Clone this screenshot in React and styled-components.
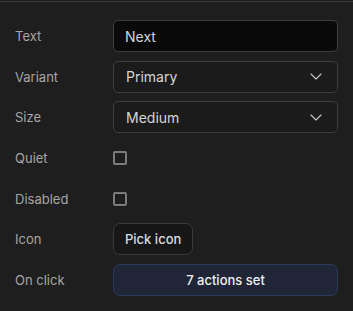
import React from 'react';
import styled, { createGlobalStyle } from 'styled-components';

const GlobalStyle = createGlobalStyle`
  html, body {
    margin: 0;
    background: #1e1e1e;
    font-family: Inter, "Noto Sans", sans-serif;
  }
`;

// ---- stateless component definition
const App = () => {
  return (
    <>
      <GlobalStyle />
      <Panel>
        <Row>
          <Label>Text</Label>
          <TextInput defaultValue="Next" />
        </Row>
        <Row>
          <Label>Variant</Label>
          <Select>
            <span>Primary</span>
            <Chevron />
          </Select>
        </Row>
        <Row>
          <Label>Size</Label>
          <Select>
            <span>Medium</span>
            <Chevron />
          </Select>
        </Row>
        <Row>
          <Label>Quiet</Label>
          <Checkbox />
        </Row>
        <Row>
          <Label>Disabled</Label>
          <Checkbox />
        </Row>
        <Row>
          <Label>Icon</Label>
          <Button type="button">Pick icon</Button>
        </Row>
        <Row>
          <Label>On click</Label>
          <Button type="button" $primary>7 actions set</Button>
        </Row>
      </Panel>
    </>
  );
};

export default App;

// ---- small drawing for the select arrow
const Chevron = () => (
  <svg width="12" height="7" viewBox="0 0 12 7" fill="none">
    <path d="M1 1 L6 6 L11 1" stroke="#c8c8c8" strokeWidth="1.1" strokeLinecap="round" strokeLinejoin="round" />
  </svg>
);

// ------ UI component definition
const Panel = styled.div`
  margin-top: 1px;
  border-top: 1px solid #363636;
  padding: 18px 15px 15px 15px;
  display: flex;
  flex-direction: column;
  gap: 8.67px;
`;

const Row = styled.div`
  display: grid;
  grid-template-columns: 98px 1fr;
  align-items: center;
  height: 32px;
`;

const Label = styled.label`
  font-size: 13px;
  color: #a6a6a6;
`;

const TextInput = styled.input`
  box-sizing: border-box;
  height: 32px;
  width: 100%;
  background: #0a0a0a;
  border: 1px solid #3d3d3d;
  border-radius: 5px;
  padding: 0 11px;
  font-family: inherit;
  font-size: 14px;
  color: #d6d6d6;
  outline: none;
`;

const Select = styled.div`
  box-sizing: border-box;
  height: 32px;
  display: flex;
  align-items: center;
  justify-content: space-between;
  background: #1b1b1b;
  border: 1px solid #3d3d3d;
  border-radius: 5px;
  padding: 0 15px 0 12px;
  font-size: 14px;
  color: #d6d6d6;
`;

const Checkbox = styled.span`
  box-sizing: border-box;
  width: 14px;
  height: 14px;
  border: 2px solid #7b7b7b;
  border-radius: 2px;
`;

const Button = styled.button`
  box-sizing: border-box;
  height: 32px;
  justify-self: ${p => (p.$primary ? 'stretch' : 'start')};
  padding: 0 11px;
  background: ${p => (p.$primary ? '#202637' : '#171717')};
  border: 1px solid ${p => (p.$primary ? '#293a5b' : '#3a3a3a')};
  border-radius: 7px;
  font-family: inherit;
  font-size: 13px;
  font-weight: 500;
  color: ${p => (p.$primary ? '#f0f0f0' : '#dcdcdc')};
`;
